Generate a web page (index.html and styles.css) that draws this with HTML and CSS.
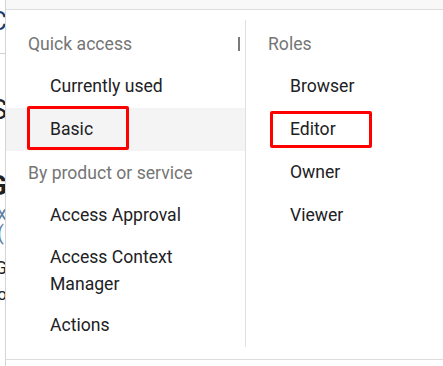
FILE: index.html
```html
<!DOCTYPE html>
<html lang="en">
<head>
    <meta charset="UTF-8">
    <meta name="viewport" content="width=device-width, initial-scale=1.0">
    <title>Select a role</title>
    <link rel="stylesheet" href="styles.css">
</head>
<body>
    <div class="page">
        <div class="backdrop">
            <div class="frag frag-c">C</div>
            <div class="frag-line"></div>
            <div class="frag frag-s">S</div>
            <div class="frag frag-g">G</div>
            <div class="frag frag-x">x (</div>
            <div class="frag frag-g2">G</div>
            <div class="frag frag-co">co</div>
        </div>
        <div class="menu">
            <div class="menu-top"></div>
            <div class="menu-body">
                <div class="column left">
                    <div class="header">
                        <span>Quick access</span>
                        <span class="caret"></span>
                    </div>
                    <div class="item">Currently used</div>
                    <div class="item selected">
                        Basic
                        <span class="box box-basic"></span>
                    </div>
                    <div class="header">By product or service</div>
                    <div class="item">Access Approval</div>
                    <div class="item wrap">Access Context<br>Manager</div>
                    <div class="item">Actions</div>
                </div>
                <div class="column right">
                    <div class="header">Roles</div>
                    <div class="item">Browser</div>
                    <div class="item">
                        Editor
                        <span class="box box-editor"></span>
                    </div>
                    <div class="item">Owner</div>
                    <div class="item">Viewer</div>
                </div>
            </div>
            <div class="menu-bottom"></div>
        </div>
    </div>
</body>
</html>
```

FILE: styles.css
```css
body {
    margin: 0;
    font-family: Roboto, "Liberation Sans", Arial, sans-serif;
    background: #ffffff;
    overflow: hidden;
}
.page {
    display: flex;
    height: 366px;
}
.backdrop {
    width: 5px;
    flex-shrink: 0;
    overflow: hidden;
    position: relative;
    background: #ffffff;
}
.frag {
    position: absolute;
    right: -2px;
    color: #202124;
    line-height: 1;
}
.frag-c {
    top: 8px;
    font-size: 26px;
    color: #1a3e6b;
}
.frag-line {
    position: absolute;
    top: 53px;
    left: 0;
    right: 0;
    height: 1px;
    background: #d0d0d0;
}
.frag-s {
    top: 96px;
    font-size: 28px;
}
.frag-g {
    top: 172px;
    font-size: 28px;
    font-weight: bold;
}
.frag-x {
    top: 203px;
    font-size: 20px;
    color: #5f7fa8;
}
.frag-g2 {
    top: 259px;
    font-size: 18px;
}
.frag-co {
    top: 286px;
    font-size: 17px;
}
.menu {
    flex: 1;
    display: flex;
    flex-direction: column;
    background: #ffffff;
    box-shadow: -2px 0 3px rgba(0,0,0,0.18);
    border-left: 1px solid #d4d4d4;
}
.menu-top {
    height: 9px;
    background: #f8f8f8;
    border-bottom: 1px solid #dcdcdc;
}
.menu-body {
    display: flex;
    padding: 10px 0 12px;
}
.column {
    padding-top: 2px;
}
.column.left {
    width: 239px;
    border-right: 1px solid #e0e0e0;
}
.column.right {
    flex: 1;
}
.header {
    display: flex;
    justify-content: space-between;
    align-items: center;
    height: 43px;
    padding: 0 5px 0 22px;
    font-size: 17.6px;
    color: #757575;
}
.caret {
    width: 2px;
    height: 14px;
    background: #7a7a7a;
}
.item {
    position: relative;
    padding: 8px 0 8px 44px;
    line-height: 27px;
    font-size: 17.6px;
    color: #202124;
}
.item.wrap {
    padding: 7px 0 6px 44px;
}
.item.selected {
    background: #f4f4f4;
}
.box {
    position: absolute;
    border: 3px solid #ff0000;
    border-radius: 2px;
}
.box-basic {
    left: 21px;
    top: -2px;
    width: 96px;
    height: 38px;
}
.box-editor {
    left: 24px;
    top: 3px;
    width: 96px;
    height: 31px;
}
.menu-bottom {
    border-top: 1px solid #dcdcdc;
    flex: 1;
    background: #ffffff;
}
```
